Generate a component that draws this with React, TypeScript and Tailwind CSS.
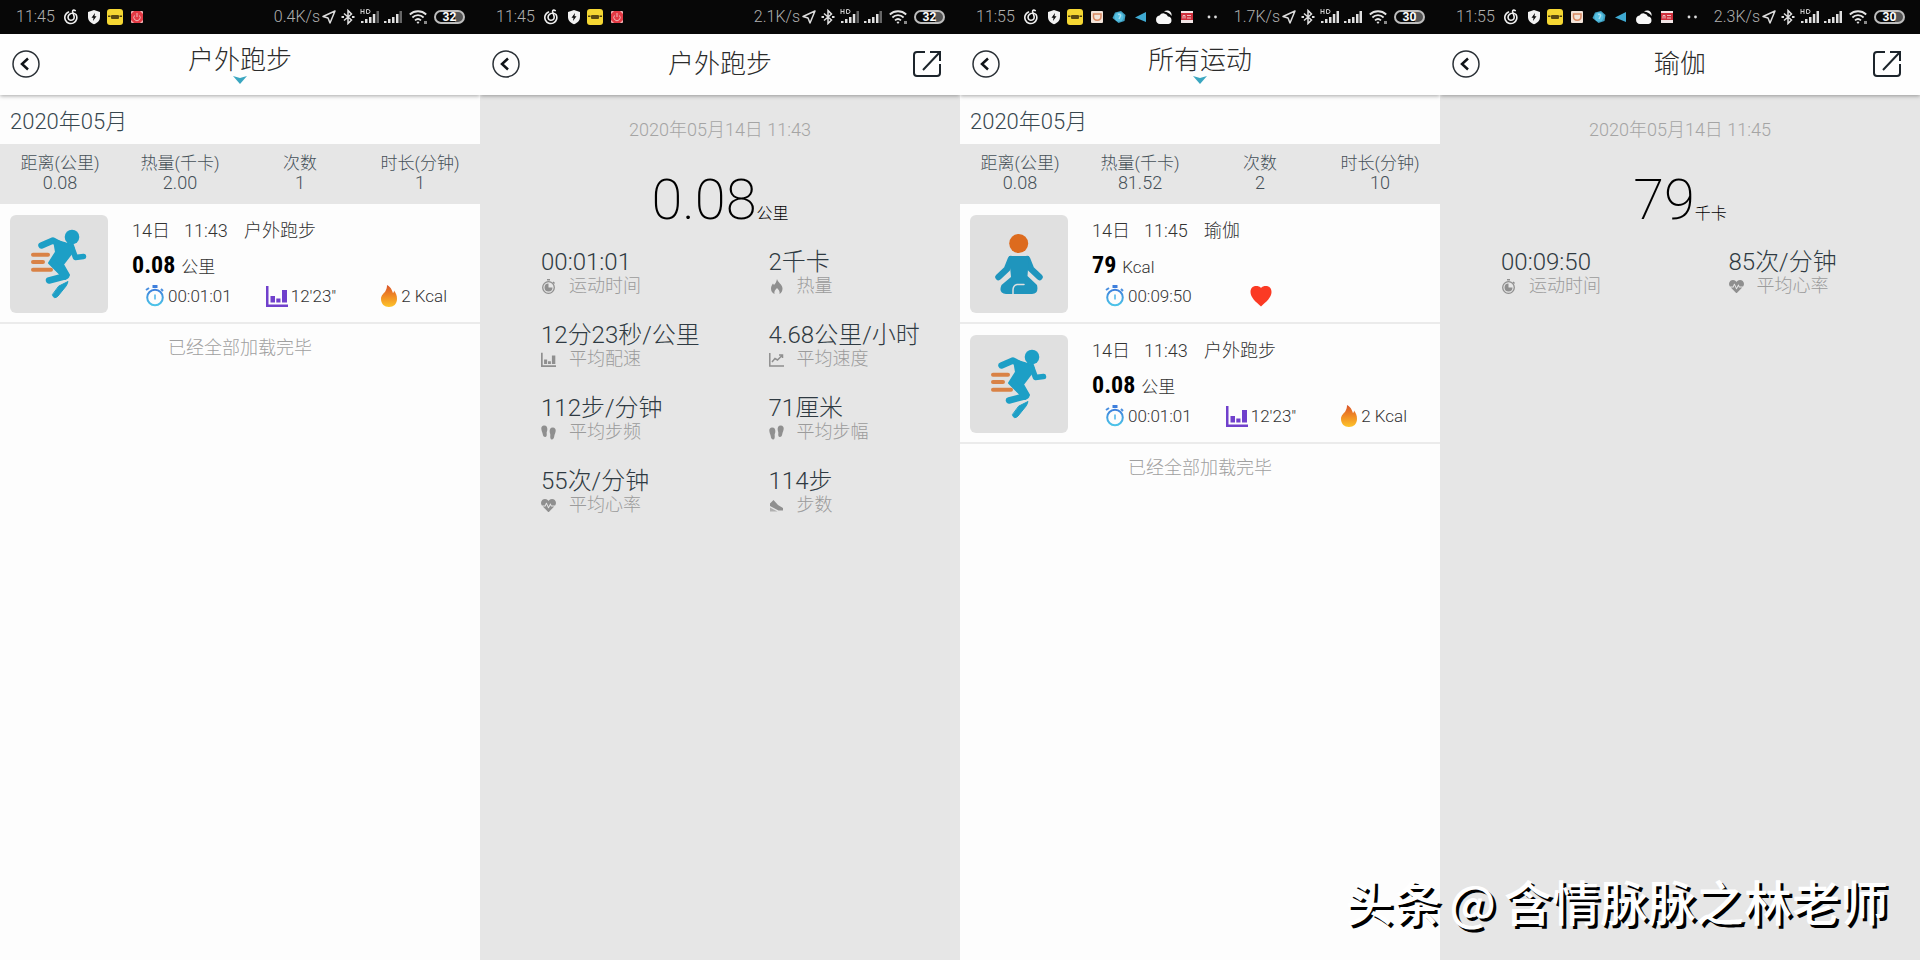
import React from "react";
import { FaHeartbeat } from "react-icons/fa";

type Sport = "run" | "yoga";

interface Activity {
  sport: Sport;
  day: string;
  time: string;
  name: string;
  value: string;
  unit: string;
  duration: string;
  pace?: string;
  calories?: string;
}

interface Stat {
  icon: React.ReactNode;
  value: string;
  label: string;
}

const run: Activity = {
  sport: "run",
  day: "14日",
  time: "11:43",
  name: "户外跑步",
  value: "0.08",
  unit: "公里",
  duration: "00:01:01",
  pace: "12'23\"",
  calories: "2 Kcal",
};

const yoga: Activity = {
  sport: "yoga",
  day: "14日",
  time: "11:45",
  name: "瑜伽",
  value: "79",
  unit: "Kcal",
  duration: "00:09:50",
};

/* ---------- status bar ---------- */

function MusicIcon() {
  return (
    <svg width="16" height="16" viewBox="0 0 16 16" fill="none" stroke="#f0f0f0" strokeWidth="1.600" strokeLinecap="round">
      <path d="M5.500 3A6 6 0 1 0 13 5.500C11.500 3.800 8.500 3.800 6.500 5.300 4 7.500 5 11.300 8 11.300s3.500-2.300 3-4.300L9.700 3c-.4-1.600 1-2.500 2.500-1.400" />
    </svg>
  );
}

function ShieldIcon() {
  return (
    <svg width="14" height="16" viewBox="0 0 14 16">
      <path d="M7 1 13 3v5c0 3.500-2.500 5.800-6 7.300C3.500 13.800 1 11.500 1 8V3z" fill="#f2f2f2" />
      <path d="M8 4 4.500 8.800h2L6 12l3.500-4.800h-2z" fill="#0a0a0a" />
    </svg>
  );
}

function YellowAppIcon() {
  return (
    <svg width="16" height="16" viewBox="0 0 16 16">
      <rect width="16" height="16" rx="3" fill="#f5d733" />
      <path d="M1 6.500h2.500v1.500H1zM12.500 6.500H15v1.500h-2.500z" fill="#4a3d10" />
      <rect x="4" y="6" width="8" height="4" rx="1" fill="#5a4a12" />
    </svg>
  );
}

function RedAppIcon() {
  return (
    <svg width="16" height="16" viewBox="0 0 16 16">
      <rect x="2" y="2" width="12" height="12" rx="1" fill="#f0b4b6" />
      <path d="M5 2h6l3 3v6l-3 3H5l-3-3V5z" fill="#e23a44" />
      <path d="M8 4v4M5.500 6.500a3.200 3.200 0 1 0 5 0" stroke="#f2b5b8" fill="none" />
    </svg>
  );
}

function ExtraAppIcons() {
  return (
    <>
      <svg width="16" height="16" viewBox="0 0 16 16">
        <rect x="2" y="2" width="12" height="12" rx="1" fill="#f3e4da" />
        <path d="M4.500 5h7.500v2.500c0 2.300-1.600 3.700-3.800 3.700S4.500 9.800 4.500 7.500z" stroke="#d98a63" strokeWidth="1.500" fill="none" />
      </svg>
      <svg width="16" height="16" viewBox="0 0 16 16">
        <path d="M1.500 9 4 3.500 10 2l4.500 4-1 6-6 2z" fill="#3f9fc0" />
        <circle cx="8" cy="8" r="4.500" fill="#55bfe0" />
        <path d="M7 5.500c2-1 3.500 1 2 2.500l-1 2" stroke="#a8e0ef" strokeWidth="1.500" fill="none" />
      </svg>
      <svg width="16" height="16" viewBox="0 0 16 16">
        <path d="M2 8.500 13 3v10z" fill="#3fa9d1" />
      </svg>
      <svg width="18" height="16" viewBox="0 0 18 16">
        <path d="M5 15a4.300 4.300 0 0 1-.5-8.500A4.800 4.800 0 0 1 13 7.500 3.800 3.800 0 0 1 13.500 15z" fill="#f7f7f7" />
        <path d="M9 2.500C12 0 17.500 2 16.500 7 15 4.500 12.500 3 9 2.500z" fill="#f7f7f7" />
      </svg>
      <svg width="16" height="16" viewBox="0 0 16 16">
        <rect x="2" y="2" width="12" height="12" fill="#f3e6e6" />
        <rect x="2" y="4" width="12" height="7" fill="#cf2f3c" />
        <path d="M4 9.500V6.500h2v3M8 6.500h4M8 9h4" stroke="#f1c0c3" fill="none" />
      </svg>
      <svg width="16" height="16" viewBox="0 0 16 16" className="ml-1">
        <circle cx="4" cy="8" r="1.400" fill="#ddd" />
        <circle cx="10.500" cy="8" r="1.400" fill="#ddd" />
      </svg>
    </>
  );
}

function BluetoothIcon() {
  return (
    <svg width="14" height="16" viewBox="0 0 14 16" fill="none" stroke="#e0e0e0" strokeWidth="1.500">
      <path d="M3 4.500 10.500 11 7 14.500V1.500L10.500 5 3 11.500" />
      <path d="M.5 8H3M11 8h2.500" strokeWidth="2" />
    </svg>
  );
}

function SignalIcon({ full }: { full: boolean }) {
  return (
    <svg width="18" height="14" viewBox="0 0 18 14">
      <path d="M0 11h2.500v2H0zM4 9h2.500v4H4zM8 7h2.500v6H8zM12 4h2.500v9H12z" fill="#e0e0e0" />
      <path d="M15.500 1H18v12h-2.500z" fill={full ? "#e0e0e0" : "#666"} />
    </svg>
  );
}

function HdSignalIcon({ full }: { full: boolean }) {
  return (
    <svg width="19" height="16" viewBox="0 0 19 16">
      <path d="M1 0v5M1 2.500h3M4 0v5M6.500.5v4H8Q10 4.500 10 2.500T8 .5z" stroke="#ccc" fill="none" />
      <path d="M1 12h2.500v2H1zM5 10h2.500v4H5zM9 8h2.500v6H9zM12.800 5h2.500v9h-2.500z" fill="#e0e0e0" />
      <path d="M16.500 2H19v12h-2.500z" fill={full ? "#e0e0e0" : "#666"} />
    </svg>
  );
}

function StatusBar({ time, speed, battery, extra }: { time: string; speed: string; battery: string; extra?: boolean }) {
  return (
    <div className="flex h-[34px] items-center justify-between bg-[#070707] pr-[15px] pl-4 text-base leading-none text-[#b0b0b0]">
      <div className="flex items-center gap-1.5">
        <span className="mr-0.5">{time}</span>
        <MusicIcon />
        <span className="ml-0.5">
          <ShieldIcon />
        </span>
        <YellowAppIcon />
        {extra ? <ExtraAppIcons /> : <RedAppIcon />}
      </div>
      <div className="flex items-center gap-[5px]">
        <div className="flex items-center gap-0.5">
          <span>{speed}</span>
          <svg width="14" height="14" viewBox="0 0 14 14">
            <path d="M13 1 1 6.500l5 1.500L8 13z" stroke="#ddd" strokeWidth="1.500" strokeLinejoin="round" fill="none" />
          </svg>
        </div>
        <BluetoothIcon />
        <HdSignalIcon full={!!extra} />
        <SignalIcon full={!!extra} />
        <svg width="20" height="16" viewBox="0 0 20 16" className="ml-0.5">
          <path d="M.8 5.500a12 12 0 0 1 16.400 0M3.400 8.500a8 8 0 0 1 11.200 0M6 11.300a4.500 4.500 0 0 1 6 0" stroke="#e4e4e4" strokeWidth="1.800" fill="none" />
          <path d="M7.500 13a2.500 2.500 0 0 1 3 0L9 15z" fill="#e4e4e4" />
          <path d="M15 12h3v3h-3z" fill="#888" />
        </svg>
        <span className="flex h-[14px] w-[31px] items-center justify-center rounded-full border-2 border-[#bdbdbd] bg-linear-to-r from-[#0a0a0a] from-70% to-[#555] to-70% text-xs font-bold text-white">
          {battery}
        </span>
      </div>
    </div>
  );
}

/* ---------- header ---------- */

function Header({ title, dropdown }: { title: string; dropdown?: boolean }) {
  return (
    <header className="relative z-10 grid h-[61px] grid-cols-[48px_1fr_48px] items-center bg-[#fefefe] pb-px shadow-[0_1px_4px_rgba(0,0,0,0.35)]">
      <button aria-label="返回" className="ml-3 w-7">
        <svg width="28" height="28" viewBox="0 0 28 28" fill="none">
          <circle cx="14" cy="14" r="13" stroke="#2a3036" strokeWidth="1.500" />
          <path d="M16 8.500 10 14l6 5.500" stroke="#101418" strokeWidth="2.500" />
        </svg>
      </button>
      {dropdown ? (
        <button className="flex flex-col items-center text-[26px] leading-8 text-[#2b2b2b]">
          {title}
          <svg width="14" height="8" viewBox="0 0 14 8">
            <path d="M0 0 7 2l7-2-7 8z" fill="#3aa6c0" />
          </svg>
        </button>
      ) : (
        <h1 className="text-center text-[26px] leading-8 text-[#2b2b2b]">{title}</h1>
      )}
      {!dropdown && (
        <button aria-label="分享" className="w-7">
          <svg width="30" height="28" viewBox="0 0 30 28" fill="none" stroke="#1c242b" strokeWidth="2">
            <path d="M13 2H5Q2 2 2 5v18q0 3 3 3h20q3 0 3-3V14" />
            <path d="M18 2h10v9M28 2 11 20" />
          </svg>
        </button>
      )}
    </header>
  );
}

/* ---------- activity list ---------- */

function RunnerIcon() {
  return (
    <svg viewBox="0 0 98 98" className="h-full w-full" fill="none" strokeLinecap="round" strokeLinejoin="round">
      <path d="M23 39.700h15M23 47h10M23 54.700h18" stroke="#d98246" strokeWidth="4" />
      <circle cx="62" cy="22" r="7.300" fill="#1d9fc6" />
      <path d="M31.500 30.500 43 25.500 55 32" stroke="#1d9fc6" strokeWidth="6.500" />
      <path d="M62 33l3.500 9.500 8-1" stroke="#1d9fc6" strokeWidth="5.500" />
      <path d="M44 25 56 28.500 63 30 64 35 53 49.500 59 60 55 64 39 48 46 37z" fill="#1d9fc6" stroke="#1d9fc6" strokeWidth="2" />
      <path d="M44 49 56 61 39 65.500" stroke="#1d9fc6" strokeWidth="6.500" />
      <path d="M49 71 58 66.500 56.500 70.500 48 81Q44 85 42.500 80z" fill="#1d9fc6" stroke="#1d9fc6" />
    </svg>
  );
}

function YogaIcon() {
  return (
    <svg viewBox="0 0 98 98" className="h-full w-full" fill="none" strokeLinecap="round" strokeLinejoin="round">
      <circle cx="48.700" cy="28.500" r="9.500" fill="#dd6b1e" />
      <path d="M41 44 37 54 28.500 62M57 44l4 10 8.500 8" stroke="#1f95bd" strokeWidth="6.500" />
      <path d="M39 41h20l-1.500 20L67 70q2 9-5 9H36q-8-1-4.500-9L41 62z" fill="#1f95bd" />
      <path d="M54 69.500h-7q-4 1-4 5.500v4" stroke="#e0e0e0" strokeWidth="1.500" />
    </svg>
  );
}

function StopwatchIcon() {
  return (
    <svg width="20" height="22" viewBox="0 0 20 22" fill="none">
      <defs>
        <linearGradient id="watch" x1="0" y1="0" x2="0" y2="1">
          <stop offset="0" stopColor="#3c7fdc" />
          <stop offset="1" stopColor="#4cc4e8" />
        </linearGradient>
      </defs>
      <circle cx="10" cy="12.500" r="7.800" stroke="url(#watch)" strokeWidth="2" />
      <path d="M7.500 0h5v3h-5z" fill="#3f7fdc" />
      <path d="M1 5l3-2M16 4l2 2" stroke="#4a8fe0" strokeWidth="2" />
      <path d="M10 9.500v5" stroke="#4cb4e8" strokeWidth="1.500" />
    </svg>
  );
}

function BarsIcon({ color, size }: { color: string; size: number }) {
  return (
    <svg width={size} height={size} viewBox="0 0 22 22" fill={color}>
      <path d="M0 1h2.500v18.500H22V22H0zM4.500 11h4.500v6.500H4.500zM10.300 13.500H14.500v4h-4.200zM16 5H21v12.500h-5z" />
    </svg>
  );
}

function FlameIcon() {
  return (
    <svg width="18" height="22" viewBox="0 0 18 22">
      <defs>
        <linearGradient id="flame" x1="0" y1="0" x2="0" y2="1">
          <stop offset="0" stopColor="#d9542b" />
          <stop offset="0.500" stopColor="#f08a24" />
          <stop offset="1" stopColor="#fdc42a" />
        </linearGradient>
      </defs>
      <path d="M7 0c5 3 5 6 6 8 .8-.5 1-1.500 1-2.500 2 2.500 3 5 3 8.500 0 5-3.500 8-8 8s-8-3-8-8c0-4 3-5.500 4.500-8C6.500 4 7 2.500 7 0z" fill="url(#flame)" />
    </svg>
  );
}

function RedHeartIcon() {
  return (
    <svg width="22" height="22" viewBox="0 0 22 22">
      <path d="M11 21.500C6 17 .5 12.500.5 7 .5 3 3 1 6 1c2 0 4 .5 5 2 1-1.500 3-2 5-2 3 0 5.500 2 5.500 6 0 5.500-5.500 10-10.500 14.500z" fill="#fb3a24" />
    </svg>
  );
}

function ActivityItem({ item }: { item: Activity }) {
  return (
    <li className="flex h-[120px] border-b-2 border-[#ebebeb] pt-[11px] pr-2.5 pl-2.5 text-[#333]">
      <div className="h-[98px] w-[98px] shrink-0 rounded-md bg-[#e0e0e0]">
        {item.sport === "run" ? <RunnerIcon /> : <YogaIcon />}
      </div>
      <div className="ml-6 grow">
        <p className="flex h-8 items-center text-lg">
          <span className="w-[52px]">{item.day}</span>
          <span className="w-[60px]">{item.time}</span>
          <span>{item.name}</span>
        </p>
        <p className="flex h-[37px] items-baseline gap-1.5 text-[17px]">
          <strong className="font-['Liberation_Sans_Narrow','Roboto_Condensed','Open_Sans_Condensed',Roboto,sans-serif] text-2xl leading-9 font-bold text-black">
            {item.value}
          </strong>
          <span>{item.unit}</span>
        </p>
        <div className="grid grid-cols-3 text-[17px] leading-6">
          <span className="flex items-center justify-center gap-[3px]">
            <StopwatchIcon />
            {item.duration}
          </span>
          <span className="flex items-center justify-center gap-[3px]">
            {item.pace ? <BarsIcon color="#7040cc" size={22} /> : <RedHeartIcon />}
            {item.pace}
          </span>
          {item.calories && (
            <span className="flex items-center justify-center gap-[3px]">
              <FlameIcon />
              {item.calories}
            </span>
          )}
        </div>
      </div>
    </li>
  );
}

function ListScreen({ title, totals, items }: { title: string; totals: string[]; items: Activity[] }) {
  const labels = ["距离(公里)", "热量(千卡)", "次数", "时长(分钟)"];

  return (
    <>
      <Header title={title} dropdown />
      <h2 className="flex h-[49px] items-center px-2.5 pt-1 text-[22px] text-[#37474f]">2020年05月</h2>
      <dl className="grid h-[60px] grid-cols-4 bg-[#e6e6e6] pt-[9px] text-center text-[#455058]">
        {labels.map((label, i) => (
          <div key={label}>
            <dt className="text-[17px] leading-5">{label}</dt>
            <dd className="text-lg leading-5">{totals[i]}</dd>
          </div>
        ))}
      </dl>
      <ul>
        {items.map((item) => (
          <ActivityItem key={item.time} item={item} />
        ))}
      </ul>
      <p className="pt-2.5 text-center text-lg text-[#a0a0a0]">已经全部加载完毕</p>
    </>
  );
}

/* ---------- activity detail ---------- */

const gray = "#8f8f8f";

function TimerGlyph() {
  return (
    <svg width="15" height="15" viewBox="0 0 15 15" fill="none">
      <circle cx="7.500" cy="8.500" r="5.800" stroke={gray} strokeWidth="1.300" />
      <path d="M7.500 8.500V4.500a4 4 0 1 0 4 4z" fill={gray} />
      <path d="M6 .800h3M12 3l1.500 1.500" stroke={gray} strokeWidth="1.500" />
    </svg>
  );
}

function FlameGlyph() {
  return (
    <svg width="15" height="15" viewBox="0 0 15 15">
      <path d="M8 0c.500 3 5.500 5.500 5.500 9.500 0 2.500-1 4.500-3 5.500.500-2.500-.5-4-2.500-6-2 2-3 3.500-2.500 6-2.500-1-3.500-3-3.500-5.500C2 7 3 6 4 4.500l1 1.500C6.500 4.500 7.500 2.500 8 0z" fill={gray} />
    </svg>
  );
}

function TrendGlyph() {
  return (
    <svg width="15" height="15" viewBox="0 0 15 15" fill="none" stroke={gray} strokeWidth="1.500">
      <path d="M.8 1v13H15M3 10l3-3.500 2.500 1.500L13 3.500M10 3h3.500v3" />
    </svg>
  );
}

function FeetGlyph({ mirror }: { mirror?: boolean }) {
  return (
    <svg width="15" height="15" viewBox="0 0 15 15" fill={gray}>
      <g transform={mirror ? "matrix(-1 0 0 1 15 0)" : undefined}>
        <path d="M3 .5c2.500-.2 3.600 2 3.300 4.500-.2 1.500-.8 2-.6 3.500.3 2-.2 3.500-1.500 3.500-1.500 0-2.200-1-2.500-3C1.500 7.500.3 5.500.3 3.500.3 1.800 1.300.6 3 .5z" />
        <path d="M12 2.500c-2.500-.2-3.600 2-3.300 4.500.2 1.500.8 2 .6 3.500-.3 2 .2 4 1.500 4 1.500 0 2.200-1.500 2.500-3.500.2-1.500 1.400-3.500 1.400-5.500 0-1.700-1-2.900-2.700-3z" />
      </g>
    </svg>
  );
}

function ShoeGlyph() {
  return (
    <svg width="15" height="15" viewBox="0 0 15 15" fill={gray}>
      <path d="M1 5.500 4.500 2 9 7l5 3v2.500H9.500L1 8z" />
      <path d="M1 9.500 8.500 13.500H1z" fill="#b0b0b0" />
    </svg>
  );
}

const runStats: Stat[] = [
  { icon: <TimerGlyph />, value: "00:01:01", label: "运动时间" },
  { icon: <FlameGlyph />, value: "2千卡", label: "热量" },
  { icon: <BarsIcon color={gray} size={15} />, value: "12分23秒/公里", label: "平均配速" },
  { icon: <TrendGlyph />, value: "4.68公里/小时", label: "平均速度" },
  { icon: <FeetGlyph />, value: "112步/分钟", label: "平均步频" },
  { icon: <FeetGlyph mirror />, value: "71厘米", label: "平均步幅" },
  { icon: <FaHeartbeat size={15} color={gray} />, value: "55次/分钟", label: "平均心率" },
  { icon: <ShoeGlyph />, value: "114步", label: "步数" },
];

const yogaStats: Stat[] = [
  { icon: <TimerGlyph />, value: "00:09:50", label: "运动时间" },
  { icon: <FaHeartbeat size={15} color={gray} />, value: "85次/分钟", label: "平均心率" },
];

function DetailScreen({ title, date, value, unit, stats }: { title: string; date: string; value: string; unit: string; stats: Stat[] }) {
  return (
    <>
      <Header title={title} />
      <p className="pt-[21px] text-center text-lg text-[#a4a4a4]">{date}</p>
      <p className="flex items-baseline justify-center pt-5 leading-[72px] text-black">
        <span className="text-[56px] font-extralight">{value}</span>
        <span className="text-base">{unit}</span>
      </p>
      <dl className="grid grid-cols-2 gap-x-9 gap-y-[25px] pt-3.5 pl-[61px] text-[#2f3a42]">
        {stats.map((stat) => (
          <div key={stat.label} className="flex flex-col-reverse">
            <dt className="flex h-6 items-center gap-[13px] text-lg leading-6 text-[#9b9b9b]">
              {stat.icon}
              {stat.label}
            </dt>
            <dd className="text-2xl leading-6 whitespace-nowrap">{stat.value}</dd>
          </div>
        ))}
      </dl>
    </>
  );
}

export default function App() {
  return (
    <main className="relative grid min-h-screen grid-cols-4 font-[Roboto,'Noto_Sans_CJK_SC',sans-serif] font-light">
      <section className="overflow-clip bg-[#fdfdfd]">
        <StatusBar time="11:45" speed="0.4K/s" battery="32" />
        <ListScreen title="户外跑步" totals={["0.08", "2.00", "1", "1"]} items={[run]} />
      </section>
      <section className="overflow-clip bg-[#e6e6e6]">
        <StatusBar time="11:45" speed="2.1K/s" battery="32" />
        <DetailScreen title="户外跑步" date="2020年05月14日 11:43" value="0.08" unit="公里" stats={runStats} />
      </section>
      <section className="overflow-clip bg-[#fdfdfd]">
        <StatusBar time="11:55" speed="1.7K/s" battery="30" extra />
        <ListScreen title="所有运动" totals={["0.08", "81.52", "2", "10"]} items={[yoga, run]} />
      </section>
      <section className="overflow-clip bg-[#e6e6e6]">
        <StatusBar time="11:55" speed="2.3K/s" battery="30" extra />
        <DetailScreen title="瑜伽" date="2020年05月14日 11:45" value="79" unit="千卡" stats={yogaStats} />
      </section>
      <p className="absolute right-8 bottom-7 flex gap-2 font-['Noto_Sans_CJK_SC',sans-serif] text-5xl leading-[64px] font-medium whitespace-nowrap text-white [text-shadow:3px_3px_0_#000]">
        <span>头条</span>
        <span>@</span>
        <span>含情脉脉之林老师</span>
      </p>
    </main>
  );
}
